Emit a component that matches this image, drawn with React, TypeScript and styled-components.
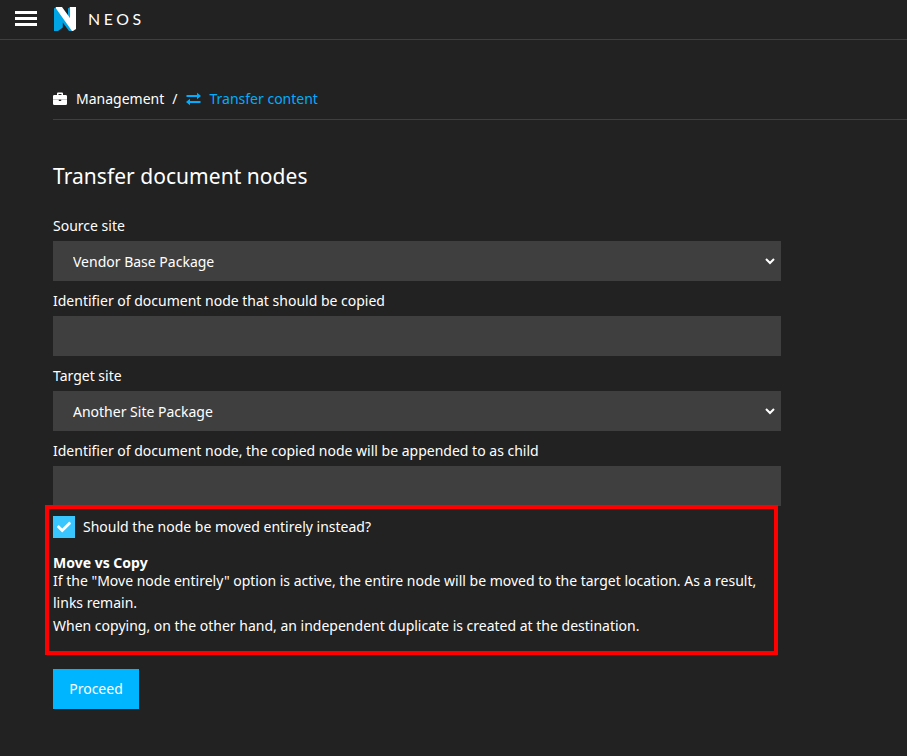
import React from 'react';
import styled, { createGlobalStyle } from 'styled-components';
import { FaCheck } from 'react-icons/fa';

const Global = createGlobalStyle`
  *{box-sizing:border-box}
  body{margin:0;background:#222;color:#fff;font:14px/22px "Noto Sans",sans-serif;overflow:hidden}
`;
const TopBar = styled.header`height:40px;border-bottom:1px solid #3f3f3f;display:flex;align-items:flex-start;padding:11px 0 0 15px;`;
const Menu = styled.button`width:22px;height:15px;padding:0;border:0;background:none;display:flex;flex-direction:column;justify-content:space-between;span{height:3px;background:#fff;width:22px}`;
const Logo = styled.svg`margin:-4px 0 0 17px;`;
const Brand = styled.span`font:400 15px/18px Lato,sans-serif;letter-spacing:3.4px;margin:-1px 0 0 12px;transform:scaleX(1.06);transform-origin:left;`;
const Crumbs = styled.nav`margin-left:53px;height:80px;padding-top:48px;border-bottom:1px solid #3f3f3f;display:flex;`;
const Crumb = styled.span<{ $active?: boolean }>`display:flex;gap:8px;color:${p => p.$active ? '#00adff' : '#fff'};`;
const Icon = styled.svg`margin-top:4px;flex:none;`;
const Slash = styled.span`margin:0 9px 0 8px;`;
const Form = styled.form`margin:40px 0 0 53px;width:728px;`;
const Title = styled.h1`font-size:21px;line-height:32px;font-weight:400;letter-spacing:.04px;margin:0 0 23px;`;
const Label = styled.label`display:block;height:26px;line-height:22px;`;
const SelectFrame = styled.div`height:40px;margin-bottom:9px;background:#3f3f3f;padding-right:3px;`;
const Select = styled.select`display:block;width:100%;height:40px;background:#3f3f3f;color:#fff;border:0;border-radius:0;padding:0 16px;font:inherit;`;
const Input = styled.input`display:block;width:100%;height:40px;margin-bottom:9px;background:#3f3f3f;color:#fff;border:0;padding:0 16px;font:inherit;`;
const Notice = styled.section`position:relative;background:#222;width:733px;height:150px;margin:-10px 0 14px -8px;border:4px solid #f00;padding:7px 4px;`;
const Check = styled.label`display:flex;gap:8px;height:22px;`;
const Box = styled.span`width:22px;height:22px;background:#39c6ff;display:grid;place-items:center;`;
const NoticeTitle = styled.strong`display:block;margin-top:14px;line-height:22px;height:18px;`;
const Text = styled.p`margin:0 0 1px;`;
const Button = styled.button`display:block;width:86px;height:40px;border:0;background:#00b5ff;color:#fff;font:inherit;padding:0;`;

export default function App() {
  return <>
    <Global />
    <TopBar>
      <Menu type="button" aria-label="Menu"><span /><span /><span /></Menu>
      <Logo width="22" height="24" viewBox="0 0 22 24">
        <path d="M0 1.500L2 0l14 11V0l-2 1.500V12l4.500 12H15L8.800 15.500V20.500L4 24H0z" fill="#00a5e5" />
        <path d="M8 0l8 11V0h-2v8z" fill="#222" />
        <path d="M14 1.500L16 0v11l-2-2.700z" fill="#00a5e5" />
        <path d="M2 0h6l8 11V0h6v22l-3 2h-1L2 1.500z" fill="#fff" />
      </Logo>
      <Brand>NEOS</Brand>
    </TopBar>
    <Crumbs>
      <Crumb>
        <Icon width="15" height="14" viewBox="0 0 15 14">
          <path fill="currentColor" fillRule="evenodd" d="M4 3V1.600Q4 .6 5 .6h4q1 0 1 1V3h2.700q1.300 0 1.300 1.300v3.100H0V4.300Q0 3 1.300 3zm1.500 0h3V2h-3zM0 7.800h5.800V9h2.400V7.800H14v3.900q0 1.300-1.300 1.300H1.300Q0 13 0 11.700z" />
        </Icon>Management
      </Crumb><Slash>/</Slash>
      <Crumb $active>
        <Icon width="15" height="14" viewBox="0 0 15 14">
          <path fill="currentColor" d="M.5 3H11V.8L15 4l-4 3.200V5H.5zM14.500 9H4V6.800L0 10l4 3.200V11h10.500z" />
        </Icon>Transfer content
      </Crumb>
    </Crumbs>
    <Form>
      <Title>Transfer document nodes</Title>
      <Label>Source site</Label>
      <SelectFrame><Select><option>Vendor Base Package</option></Select></SelectFrame>
      <Label>Identifier of document node that should be copied</Label>
      <Input />
      <Label>Target site</Label>
      <SelectFrame><Select><option>Another Site Package</option></Select></SelectFrame>
      <Label>Identifier of document node, the copied node will be appended to as child</Label>
      <Input />
      <Notice>
        <Check><Box><FaCheck size={14} /></Box>Should the node be moved entirely instead?</Check>
        <NoticeTitle>Move vs Copy</NoticeTitle>
        <Text>If the "Move node entirely" option is active, the entire node will be moved to the target location. As a result, links remain.</Text>
        <Text>When copying, on the other hand, an independent duplicate is created at the destination.</Text>
      </Notice>
      <Button type="button">Proceed</Button>
    </Form>
  </>;
}
